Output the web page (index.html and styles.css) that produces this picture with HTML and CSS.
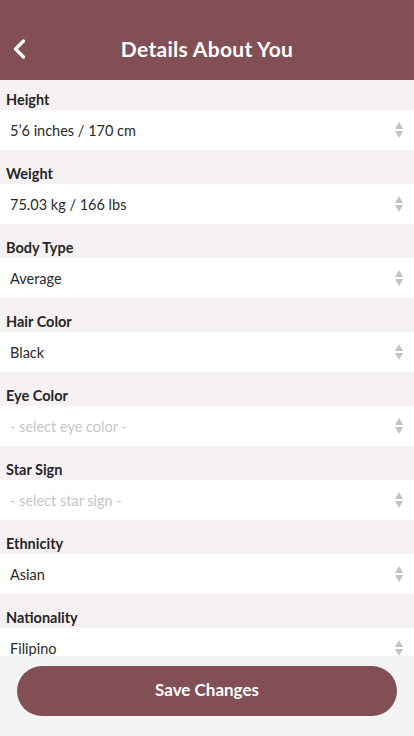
FILE: index.html
```html
<!DOCTYPE html>
<html lang="en">
<head>
<meta charset="utf-8">
<title>Details About You</title>
<link rel="stylesheet" href="styles.css">
</head>
<body>
<div class="app">
  <header class="topbar">
    <button class="back" aria-label="Back">
      <svg width="14" height="20" viewBox="0 0 14 20"><path d="M11.5 2 L3.5 10 L11.5 18" fill="none" stroke="#fff" stroke-width="3.2" stroke-linecap="round" stroke-linejoin="round"/></svg>
    </button>
    <h1 class="title">Details About You</h1>
  </header>
  <main class="list">
    <section class="group"><div class="label">Height</div><div class="field"><span class="value">5’6 inches / 170 cm</span><span class="spin"><i class="up"></i><i class="down"></i></span></div></section>
    <section class="group"><div class="label">Weight</div><div class="field"><span class="value">75.03 kg / 166 lbs</span><span class="spin"><i class="up"></i><i class="down"></i></span></div></section>
    <section class="group"><div class="label">Body Type</div><div class="field"><span class="value">Average</span><span class="spin"><i class="up"></i><i class="down"></i></span></div></section>
    <section class="group"><div class="label">Hair Color</div><div class="field"><span class="value">Black</span><span class="spin"><i class="up"></i><i class="down"></i></span></div></section>
    <section class="group"><div class="label">Eye Color</div><div class="field"><span class="value placeholder">- select eye color -</span><span class="spin"><i class="up"></i><i class="down"></i></span></div></section>
    <section class="group"><div class="label">Star Sign</div><div class="field"><span class="value placeholder">- select star sign -</span><span class="spin"><i class="up"></i><i class="down"></i></span></div></section>
    <section class="group"><div class="label">Ethnicity</div><div class="field"><span class="value">Asian</span><span class="spin"><i class="up"></i><i class="down"></i></span></div></section>
    <section class="group"><div class="label">Nationality</div><div class="field"><span class="value">Filipino</span><span class="spin"><i class="up"></i><i class="down"></i></span></div></section>
  </main>
  <footer class="footer">
    <button class="save">Save Changes</button>
  </footer>
</div>
</body>
</html>
```

FILE: styles.css
```css
* { box-sizing: border-box; }
html, body { margin: 0; padding: 0; }
body {
  font-family: Lato, "Open Sans", sans-serif;
  background: #f4f4f4;
}
.app {
  width: 414px;
  height: 736px;
  display: flex;
  flex-direction: column;
  overflow: hidden;
}
.topbar {
  height: 80px;
  flex: none;
  background: #824f55;
  display: flex;
  align-items: center;
  justify-content: center;
  padding-top: 16px;
  position: relative;
}
.back {
  position: absolute;
  left: 12px;
  top: 39px;
  width: 16px;
  height: 20px;
  padding: 0;
  border: 0;
  background: none;
  display: flex;
}
.title {
  margin: 0;
  color: #fff;
  font-size: 21px;
  font-weight: 700;
  letter-spacing: 0.3px;
}
.list {
  flex: 1;
  min-height: 0;
  overflow: hidden;
  background: #f6f2f3;
  display: flex;
  flex-direction: column;
  gap: 14px;
  padding-top: 10px;
}
.group { flex: none; }
.label {
  height: 20px;
  line-height: 20px;
  padding-left: 6px;
  font-size: 14.5px;
  font-weight: 700;
  color: #262626;
}
.field {
  height: 40px;
  background: #fff;
  display: flex;
  align-items: center;
  justify-content: space-between;
  padding: 0 11px 0 10px;
}
.value {
  font-size: 14.5px;
  color: #2a2a2a;
}
.placeholder { color: #c6c6c6; }
.spin {
  display: flex;
  flex-direction: column;
  gap: 2px;
}
.spin i {
  display: block;
  width: 0;
  height: 0;
  border-left: 4px solid transparent;
  border-right: 4px solid transparent;
}
.spin .up { border-bottom: 7px solid #c2c2c2; }
.spin .down { border-top: 7px solid #c2c2c2; }
.footer {
  height: 80px;
  flex: none;
  background: #f4f4f4;
  padding: 10px 17px 0;
}
.save {
  width: 100%;
  height: 50px;
  border: 0;
  border-radius: 25px;
  background: #824f55;
  color: #fff;
  font-family: Lato, "Open Sans", sans-serif;
  font-size: 17px;
  font-weight: 700;
  padding: 0 0 3px;
}
```
